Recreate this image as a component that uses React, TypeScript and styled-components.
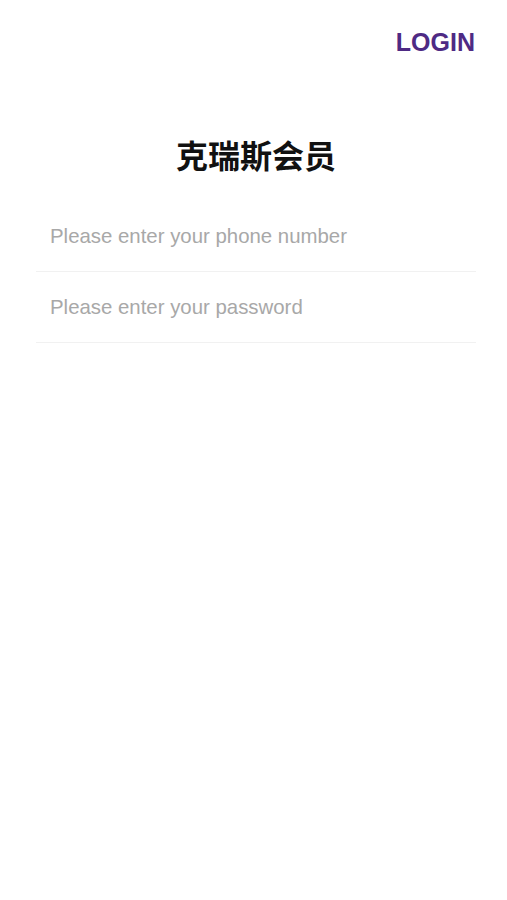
import React from 'react';
import styled, { createGlobalStyle } from 'styled-components';

const GlobalStyle = createGlobalStyle`
  html, body {
    margin: 0;
    padding: 0;
    background: #ffffff;
  }
  body {
    font-family: 'Liberation Sans', Arial, sans-serif;
  }
  * {
    box-sizing: border-box;
  }
`;

const Page = styled.div`
  width: 100%;
  min-height: 900px;
  display: flex;
  flex-direction: column;
  background: #ffffff;
`;

const Header = styled.header`
  display: flex;
  justify-content: flex-end;
  padding: 27px 32px 0 0;
`;

const LoginLink = styled.a`
  font-size: 25px;
  line-height: 30px;
  font-weight: 700;
  color: #4e2a84;
  text-decoration: none;
  cursor: pointer;
`;

const Content = styled.main`
  display: flex;
  flex-direction: column;
  padding: 0 31px 0 36px;
`;

const Title = styled.h1`
  margin: 80px 0 0;
  text-align: center;
  font-family: 'Liberation Sans', 'Noto Sans CJK SC', sans-serif;
  font-size: 32px;
  line-height: 40px;
  font-weight: 700;
  color: #111111;
`;

const Form = styled.form`
  display: flex;
  flex-direction: column;
  margin-top: 24px;
`;

const FieldRow = styled.div`
  height: 71px;
  display: flex;
  align-items: center;
  border-bottom: 1px solid #f1f1f1;
`;

const Input = styled.input`
  width: 100%;
  border: none;
  outline: none;
  background: transparent;
  padding: 0 0 0 14px;
  font-family: 'Liberation Sans', Arial, sans-serif;
  font-size: 20.4px;
  line-height: 24px;
  color: #333333;

  &::placeholder {
    color: #a8a8a8;
  }
`;

type Field = {
  name: string;
  type: string;
  placeholder: string;
};

const fields: Field[] = [
  { name: 'phone', type: 'tel', placeholder: 'Please enter your phone number' },
  { name: 'password', type: 'password', placeholder: 'Please enter your password' },
];

export default function App() {
  return (
    <Page>
      <GlobalStyle />
      <Header>
        <LoginLink>LOGIN</LoginLink>
      </Header>
      <Content>
        <Title>克瑞斯会员</Title>
        <Form onSubmit={e => e.preventDefault()}>
          {fields.map(field => (
            <FieldRow key={field.name}>
              <Input
                name={field.name}
                type={field.type}
                placeholder={field.placeholder}
              />
            </FieldRow>
          ))}
        </Form>
      </Content>
    </Page>
  );
}
